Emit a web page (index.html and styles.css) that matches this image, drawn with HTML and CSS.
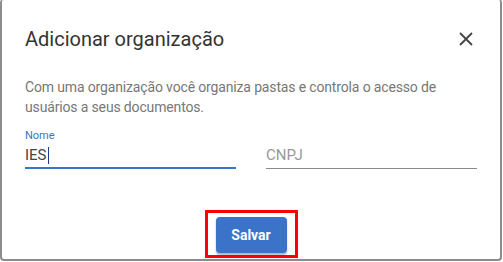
FILE: index.html
```html
<!DOCTYPE html>
<html lang="pt">
<head>
<meta charset="utf-8">
<link rel="stylesheet" href="styles.css">
</head>
<body>
<div class="dialog">
  <div class="header">
    <h1 class="title">Adicionar organização</h1>
    <button class="close" aria-label="Fechar">
      <svg width="14" height="14" viewBox="0 0 14 14"><path d="M1 1L13 13M13 1L1 13" stroke="#444" stroke-width="1.8" fill="none"/></svg>
    </button>
  </div>
  <p class="desc">Com uma organização você organiza pastas e controla o acesso de usuários a seus documentos.</p>
  <div class="fields">
    <div class="field active">
      <label class="label">Nome</label>
      <div class="input">IES<span class="caret"></span></div>
    </div>
    <div class="field">
      <label class="label hidden">CNPJ</label>
      <div class="input placeholder">CNPJ</div>
    </div>
  </div>
  <div class="footer">
    <div class="highlight">
      <button class="save">Salvar</button>
    </div>
  </div>
</div>
</body>
</html>
```

FILE: styles.css
```css
html, body {
  margin: 0;
  padding: 0;
  background: #ffffff;
  width: 503px;
  height: 262px;
  overflow: hidden;
}
body {
  font-family: Roboto, "Noto Sans", "Liberation Sans", sans-serif;
}
.dialog {
  box-sizing: border-box;
  width: 502px;
  height: 262px;
  margin-top: -1px;
  background: #fff;
  border-left: 2px solid #8c8c8c;
  border-right: 2px solid #8c8c8c;
  border-bottom: 2px solid #8c8c8c;
  border-radius: 4px;
  padding: 28px 23px 0 23px;
  display: flex;
  flex-direction: column;
}
.header {
  display: flex;
  align-items: center;
  justify-content: space-between;
  height: 24px;
}
.title {
  margin: 0;
  font-size: 20px;
  font-weight: 400;
  color: #333;
  line-height: 24px;
}
.close {
  border: 0;
  background: none;
  padding: 0;
  width: 14px;
  height: 14px;
  margin-right: 4px;
  display: flex;
}
.desc {
  margin: 26px 0 0 0;
  font-size: 14px;
  line-height: 20px;
  color: #777;
  width: 440px;
  letter-spacing: -0.15px;
}
.fields {
  display: flex;
  gap: 30px;
  margin-top: 12px;
}
.field {
  width: 211px;
  display: flex;
  flex-direction: column;
}
.label {
  font-size: 11px;
  line-height: 13px;
  color: #3b73c9;
  height: 13px;
}
.label.hidden {
  visibility: hidden;
}
.input {
  font-size: 15px;
  line-height: 20px;
  color: #444;
  padding: 3px 0 3px;
  border-bottom: 1px solid #8a8a8a;
  display: flex;
  align-items: center;
}
.field.active .input {
  border-bottom: 2px solid #3b73c9;
  padding-bottom: 2px;
}
.input.placeholder {
  color: #999;
}
.caret {
  display: inline-block;
  width: 1px;
  height: 17px;
  background: #1a3d8f;
  margin-left: 1px;
}
.footer {
  display: flex;
  justify-content: center;
  margin-top: 41px;
}
.highlight {
  border: 3px solid #ff0000;
  padding: 4px 8px 2px;
}
.save {
  width: 71px;
  height: 36px;
  border: 0;
  border-radius: 4px;
  background: #3b73c9;
  color: #fff;
  font-family: Roboto, "Liberation Sans", sans-serif;
  font-weight: 700;
  font-size: 14px;
  box-shadow: 0 2px 2px rgba(0,0,0,0.3);
  padding: 0;
}
```
